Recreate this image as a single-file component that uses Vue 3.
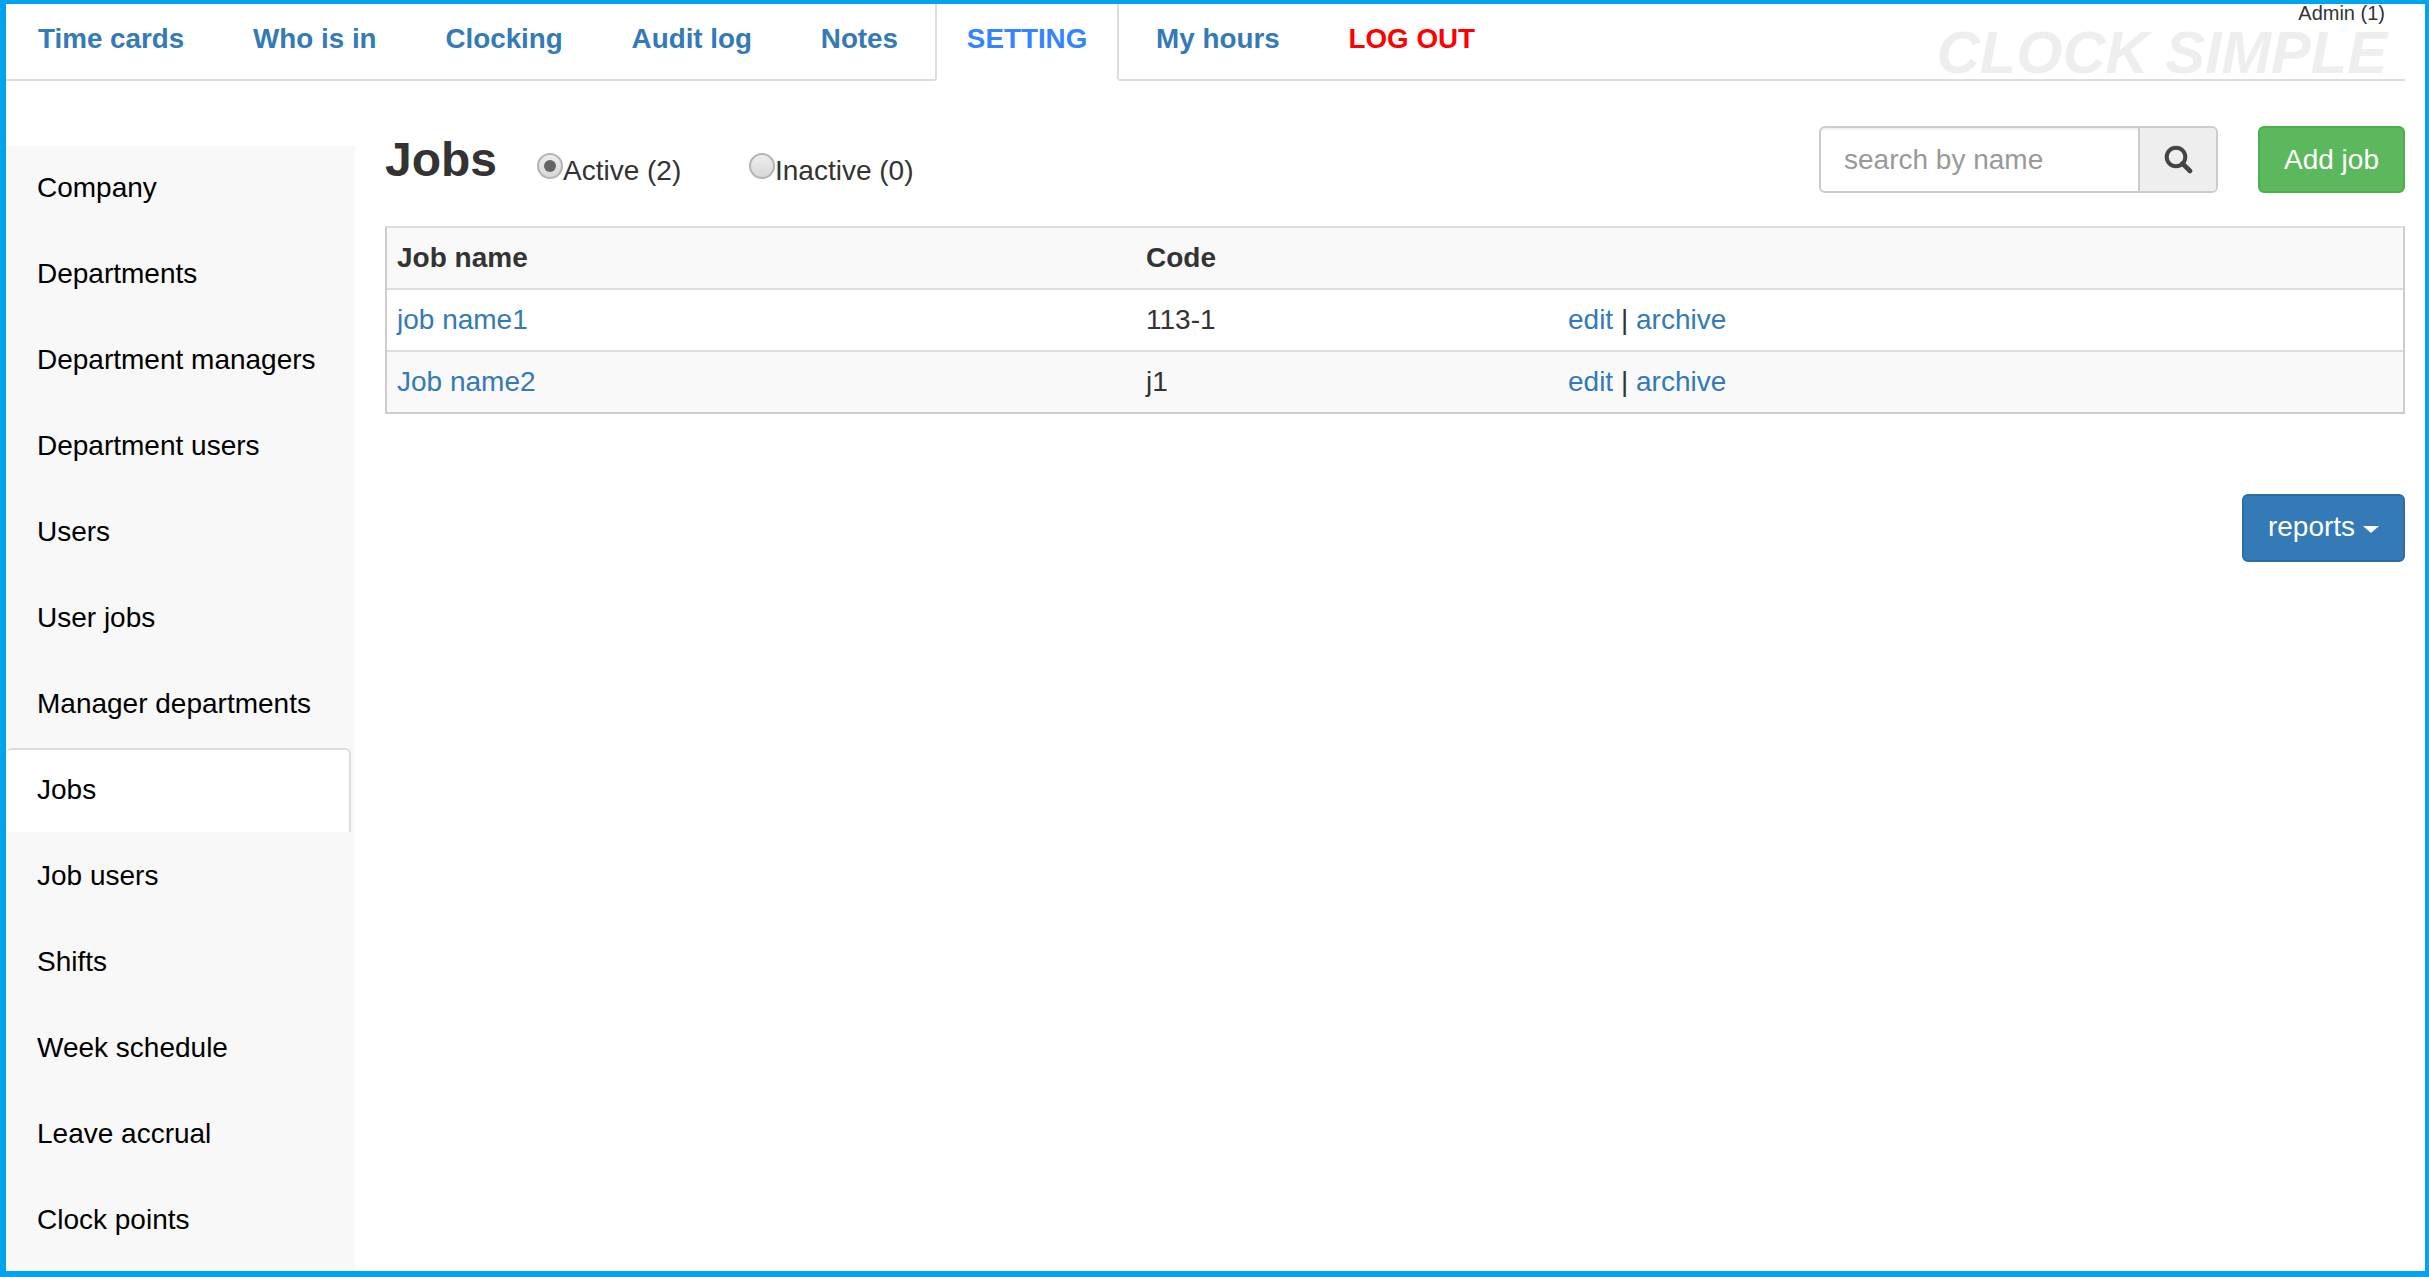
<script setup>
const tabs = [
  { label: 'Time cards' },
  { label: 'Who is in' },
  { label: 'Clocking' },
  { label: 'Audit log' },
  { label: 'Notes' },
  { label: 'SETTING', active: true },
  { label: 'My hours' },
  { label: 'LOG OUT', danger: true },
]
const sideItems = [
  'Company', 'Departments', 'Department managers', 'Department users', 'Users', 'User jobs',
  'Manager departments', 'Jobs', 'Job users', 'Shifts', 'Week schedule', 'Leave accrual', 'Clock points',
]
const jobs = [
  { name: 'job name1', code: '113-1' },
  { name: 'Job name2', code: 'j1' },
]
</script>

<template>
  <div class="frame">
    <header class="topbar">
      <nav class="tabs">
        <a
          v-for="t in tabs"
          :key="t.label"
          class="tab"
          :class="{ active: t.active, danger: t.danger }"
        >{{ t.label }}</a>
      </nav>
      <div class="brand">
        <div class="admin">Admin (1)</div>
        <div class="logo">CLOCK SIMPLE</div>
      </div>
    </header>

    <div class="main">
      <aside class="side">
        <a
          v-for="s in sideItems"
          :key="s"
          class="side-item"
          :class="{ current: s === 'Jobs' }"
        >{{ s }}</a>
      </aside>

      <section class="content">
        <div class="head">
          <h1 class="title">Jobs</h1>
          <label class="radio first"><span class="dot on"></span>Active (2)</label>
          <label class="radio"><span class="dot"></span>Inactive (0)</label>
          <div class="search">
            <input class="search-input" placeholder="search by name" />
            <span class="search-btn">
              <svg width="29" height="29" viewBox="0 0 29 29">
                <circle cx="12" cy="12" r="9.3" fill="none" stroke="#444" stroke-width="4" />
                <path d="M18.5 18.5 L26 26" stroke="#444" stroke-width="4.6" stroke-linecap="round" />
              </svg>
            </span>
          </div>
          <button class="btn add">Add job</button>
        </div>

        <div class="table">
          <div class="row th">
            <div>Job name</div>
            <div>Code</div>
            <div></div>
          </div>
          <div v-for="j in jobs" :key="j.name" class="row">
            <div><a class="link">{{ j.name }}</a></div>
            <div>{{ j.code }}</div>
            <div><a class="link">edit</a> | <a class="link">archive</a></div>
          </div>
        </div>

        <div class="foot">
          <button class="btn reports">reports<span class="caret"></span></button>
        </div>
      </section>
    </div>
  </div>
</template>

<style>
html, body { margin: 0; padding: 0; overflow: hidden; background: #fff; }
</style>

<style scoped>
.frame {
  box-sizing: border-box;
  width: 2429px;
  height: 1277px;
  border: solid #00a4ec;
  border-width: 4px 4px 6px 6px;
  font-family: "Liberation Sans", Arial, sans-serif;
  font-size: 28px;
  color: #333;
  background: #fff;
  display: flex;
  flex-direction: column;
  overflow: hidden;
}
.topbar {
  box-sizing: border-box;
  height: 77px;
  margin-right: 20px;
  border-bottom: 2px solid #ddd;
  display: flex;
  justify-content: space-between;
  flex: none;
}
.tabs { display: flex; gap: 5px; }
.tab {
  box-sizing: border-box;
  height: 77px;
  padding: 15px 29.8px 0 30px;
  font-size: 27.8px;
  line-height: 40px;
  font-weight: bold;
  color: #337ab7;
  white-space: nowrap;
  border: 2px solid transparent;
  border-top: 0;
}
.tab.active {
  color: #3385ff;
  background: #fff;
  border-color: #ddd;
  border-bottom-color: #fff;
}
.tab.danger { color: #f00; }
.brand {
  width: 480px;
  margin-right: 18px;
  text-align: right;
  position: relative;
}
.admin {
  font-size: 20px;
  line-height: 20px;
  margin-top: -1px;
  margin-right: 2px;
  color: #333;
}
.logo {
  font-size: 59.6px;
  line-height: 52px;
  margin-top: 4px;
  font-weight: bold;
  font-style: italic;
  color: #eee;
  white-space: nowrap;
}
.main {
  flex: 1;
  display: flex;
  min-height: 0;
}
.side {
  width: 349px;
  flex: none;
  margin-top: 65px;
  background: #f8f8f8;
  display: flex;
  flex-direction: column;
}
.side-item {
  box-sizing: border-box;
  height: 86px;
  flex: none;
  padding: 24px 0 0 31px;
  line-height: 36px;
  color: #000;
}
.side-item.current {
  height: 84px;
  margin: 0 4px 2px 0;
  padding: 22px 0 0 31px;
  background: #fff;
  border: solid #ddd;
  border-width: 2px 2px 0 0;
  border-radius: 6px 6px 0 0;
}
.content {
  flex: 1;
  min-width: 0;
  margin: 45px 20px 0 30px;
}
.head {
  display: flex;
  align-items: center;
  height: 67px;
}
.title {
  margin: 1px 0 0;
  font-size: 48px;
  line-height: 56px;
  font-weight: bold;
  color: #333;
  width: 152px;
  flex: none;
}
.radio {
  display: flex;
  align-items: flex-start;
  color: #333;
  line-height: 34px;
  margin-top: 28px;
  align-self: flex-start;
  white-space: nowrap;
}
.radio.first { width: 212px; }
.dot {
  box-sizing: border-box;
  width: 26px;
  height: 26px;
  margin-top: -1px;
  border-radius: 50%;
  border: 2px solid #b4b4b4;
  background: linear-gradient(#eee, #d8d8d8);
  display: flex;
  align-items: center;
  justify-content: center;
}
.dot.on::after {
  content: "";
  width: 12px;
  height: 12px;
  border-radius: 50%;
  background: #666;
}
.search {
  margin-left: auto;
  display: flex;
  box-sizing: border-box;
  width: 399px;
  height: 67px;
  border: 2px solid #ccc;
  border-radius: 6px;
  overflow: hidden;
  box-shadow: inset 0 2px 2px rgba(0, 0, 0, .06);
}
.search-input {
  flex: 1;
  min-width: 0;
  border: 0;
  outline: 0;
  background: transparent;
  padding: 0 0 0 23px;
  font: inherit;
  color: #555;
}
.search-input::placeholder { color: #999; opacity: 1; }
.search-btn {
  box-sizing: border-box;
  width: 78px;
  flex: none;
  background: #eee;
  border-left: 2px solid #ccc;
  display: flex;
  align-items: center;
  justify-content: center;
}
.btn {
  box-sizing: border-box;
  font: inherit;
  color: #fff;
  border-radius: 6px;
  border: 2px solid;
  padding: 0;
}
.add {
  width: 147px;
  height: 67px;
  margin-left: 40px;
  background: #5cb85c;
  border-color: #4cae4c;
}
.table {
  margin-top: 33px;
  border: 2px solid #ddd;
  border-right-color: #ccc;
  border-bottom-color: #ccc;
  border-left-color: #ccc;
}
.row {
  display: grid;
  grid-template-columns: 749px 422px 1fr;
  height: 62px;
  box-sizing: border-box;
  padding-left: 10px;
  align-items: center;
  line-height: 36px;
  border-top: 2px solid #ddd;
  background: #fff;
}
.row.th {
  font-weight: bold;
  border-top: 0;
  height: 60px;
  background: #f9f9f9;
}
.row:nth-child(3) { background: #f9f9f9; }
.link { color: #337ab7; }
.foot {
  margin-top: 80px;
  display: flex;
  justify-content: flex-end;
}
.reports {
  width: 163px;
  height: 68px;
  background: #337ab7;
  border-color: #2e6da4;
  display: flex;
  align-items: center;
  justify-content: center;
  padding-bottom: 2px;
}
.caret {
  margin-left: 8px;
  margin-top: 4px;
  width: 0;
  height: 0;
  border-top: 7px solid #fff;
  border-left: 8px solid transparent;
  border-right: 8px solid transparent;
}
</style>
